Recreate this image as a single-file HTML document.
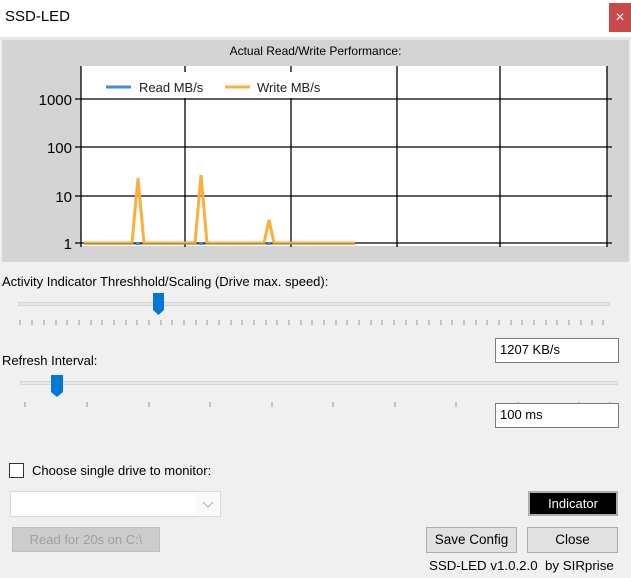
<!DOCTYPE html>
<html><head><style>
*{margin:0;padding:0;box-sizing:border-box}
body{width:631px;height:578px;background:#f0f0f0;font-family:"Liberation Sans",sans-serif;font-size:13px;color:#000;position:relative;overflow:hidden}
.a{position:absolute}
.tb{border:1px solid #7a7a7a;background:#fff;padding:3px 4px;font-size:13px}
.btn{border:1px solid #adadad;background:#e1e1e1;text-align:center;font-size:14px}
</style></head><body>
<div class="a" style="left:0;top:0;width:631px;height:37px;background:#fff"></div>
<div class="a" style="left:5px;top:8px;font-size:15px">SSD-LED</div>
<div class="a" style="left:609px;top:3px;width:22px;height:29px;background:#c9484a;color:#fff;text-align:center;line-height:29px;font-size:16px">×</div>
<div class="a" style="left:0;top:37px;width:631px;height:3px;background:#e8e8e8"></div>
<div class="a" style="left:2px;top:40px;width:627px;height:222px;background:#d4d4d4"></div>
<div class="a" style="left:0;top:44px;width:631px;text-align:center;font-size:12px">Actual Read/Write Performance:</div>
<svg class="a" style="left:0;top:0" width="631" height="270">
<rect x="81" y="66" width="526" height="180" fill="#fff"/>
<g stroke="#000" stroke-width="1.3">
<line x1="81" y1="66" x2="81" y2="247"/><line x1="185" y1="66" x2="185" y2="247"/><line x1="291" y1="66" x2="291" y2="247"/><line x1="397" y1="66" x2="397" y2="247"/><line x1="500" y1="66" x2="500" y2="247"/><line x1="607" y1="66" x2="607" y2="247"/>
<line x1="75" y1="99" x2="612" y2="99"/><line x1="75" y1="147" x2="612" y2="147"/><line x1="75" y1="196" x2="612" y2="196"/><line x1="75" y1="243" x2="612" y2="243"/>
</g>
<rect x="95" y="72" width="250" height="26" fill="#fff"/>
<line x1="106" y1="87" x2="131" y2="87" stroke="#3d8ee0" stroke-width="3"/>
<line x1="225" y1="87" x2="250" y2="87" stroke="#f9b13c" stroke-width="3"/>
<text x="139" y="92" font-size="13" font-family="Liberation Sans" fill="#222">Read MB/s</text>
<text x="257" y="92" font-size="13" font-family="Liberation Sans" fill="#222">Write MB/s</text>
<g font-size="15" font-family="Liberation Sans" text-anchor="end"><text x="72" y="105">1000</text><text x="72" y="153">100</text><text x="72" y="202">10</text><text x="72" y="249">1</text></g>
<polyline fill="none" stroke="#f9b13c" stroke-width="3" points="84,243 132,243 138,178 144,243 195,243 201,175 207,243 264,243 269,220 274,243 355,243"/>
<line x1="84" y1="244" x2="355" y2="244" stroke="#8a6a20" stroke-width="1"/>
<g fill="#3d8ee0"><rect x="136" y="242" width="4" height="3"/><rect x="199" y="242" width="4" height="3"/><rect x="267" y="242" width="4" height="3"/></g>
</svg>
<div class="a" style="left:2px;top:274px;font-size:13px">Activity Indicator Threshhold/Scaling (Drive max. speed):</div>
<div class="a" style="left:18px;top:302px;width:592px;height:4px;background:#e7e7e7;border:1px solid #d6d6d6"></div>
<svg class="a" style="left:0;top:290px" width="631" height="40">
<path d="M153 3h11v17l-5.5 5l-5.5-5z" fill="#0078d7"/>
<g stroke="#999" stroke-width="1">
<path d="M20 30v5M32 30v5M44 30v5M56 30v5M67 30v5M79 30v5M91 30v5M102 30v5M114 30v5M126 30v5M137 30v5M149 30v5M161 30v5M172 30v5M184 30v5M196 30v5M207 30v5M219 30v5M231 30v5M242 30v5M254 30v5M266 30v5M277 30v5M289 30v5M301 30v5M312 30v5M324 30v5M336 30v5M347 30v5M359 30v5M371 30v5M382 30v5M394 30v5M406 30v5M417 30v5M429 30v5M441 30v5M452 30v5M464 30v5M476 30v5M487 30v5M499 30v5M511 30v5M522 30v5M534 30v5M546 30v5M557 30v5M569 30v5M581 30v5M592 30v5M603 30v5"/>
</g></svg>
<div class="a tb" style="left:495px;top:338px;width:124px;height:25px">1207 KB/s</div>
<div class="a" style="left:2px;top:353px;font-size:13px">Refresh Interval:</div>
<div class="a" style="left:20px;top:381px;width:598px;height:4px;background:#e7e7e7;border:1px solid #d6d6d6"></div>
<svg class="a" style="left:0;top:370px" width="631" height="45">
<path d="M51 5h12v17l-6 5l-6-5z" fill="#0078d7"/>
<g stroke="#999"><path d="M25 32v5M87 32v5M149 32v5M210 32v5M272 32v5M333 32v5M395 32v5M456 32v5M518 32v5M579 32v5M610 32v5"/></g>
</svg>
<div class="a tb" style="left:495px;top:403px;width:124px;height:25px">100 ms</div>
<div class="a" style="left:9px;top:463px;width:15px;height:15px;border:1px solid #333;background:#fff"></div>
<div class="a" style="left:32px;top:463px;font-size:13px">Choose single drive to monitor:</div>
<div class="a" style="left:10px;top:491px;width:211px;height:26px;border:1px solid #d9d9d9;background:#fff"></div>
<div class="a" style="left:196px;top:492px;width:24px;height:24px;background:#fafafa"></div>
<svg class="a" style="left:202px;top:499px" width="12" height="10"><path d="M1 3l5 5 5-5" fill="none" stroke="#b0b0b0"/></svg>
<div class="a btn" style="left:12px;top:527px;width:148px;height:25px;background:#cccccc;border-color:#bfbfbf;color:#a0a0a0;line-height:23px;font-size:13px">Read for 20s on C:\</div>
<div class="a" style="left:528px;top:491px;width:90px;height:25px;background:#000;border:2px solid #adadad;color:#fff;text-align:center;line-height:21px;font-size:13px">Indicator</div>
<div class="a btn" style="left:426px;top:527px;width:91px;height:26px;line-height:24px;font-size:13.5px">Save Config</div>
<div class="a btn" style="left:527px;top:527px;width:91px;height:26px;line-height:24px;font-size:13.5px">Close</div>
<div class="a" style="left:429px;top:558px;font-size:13.3px">SSD-LED v1.0.2.0&nbsp; by SIRprise</div>
</body></html>
